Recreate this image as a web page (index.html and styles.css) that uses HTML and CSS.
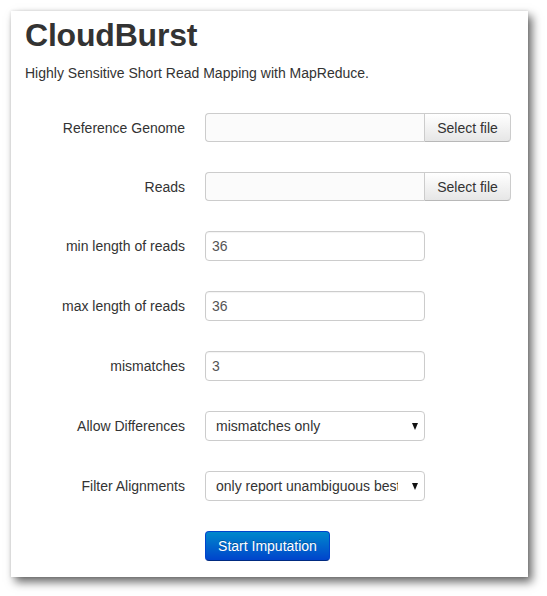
FILE: index.html
```html
<!DOCTYPE html>
<html>
<head>
<meta charset="utf-8">
<link rel="stylesheet" href="styles.css">
</head>
<body>
<div class="panel">
  <h1 class="title">CloudBurst</h1>
  <p class="lead">Highly Sensitive Short Read Mapping with MapReduce.</p>
  <form class="form">
    <div class="row file-row">
      <label class="label">Reference Genome</label>
      <div class="file">
        <span class="file-name"></span>
        <span class="file-btn">Select file</span>
      </div>
    </div>
    <div class="row file-row">
      <label class="label">Reads</label>
      <div class="file">
        <span class="file-name"></span>
        <span class="file-btn">Select file</span>
      </div>
    </div>
    <div class="row">
      <label class="label">min length of reads</label>
      <input class="input" type="text" value="36">
    </div>
    <div class="row">
      <label class="label">max length of reads</label>
      <input class="input" type="text" value="36">
    </div>
    <div class="row">
      <label class="label">mismatches</label>
      <input class="input" type="text" value="3">
    </div>
    <div class="row">
      <label class="label">Allow Differences</label>
      <span class="select-wrap">
        <select class="select"><option>mismatches only</option></select>
      </span>
    </div>
    <div class="row">
      <label class="label">Filter Alignments</label>
      <span class="select-wrap">
        <select class="select"><option>only report unambiguous best alignments</option></select>
      </span>
    </div>
    <div class="row">
      <span class="label"></span>
      <button class="btn-primary" type="button">Start Imputation</button>
    </div>
  </form>
</div>
</body>
</html>
```
FILE: styles.css
```css
html, body {
  margin: 0;
  padding: 0;
  background: #ffffff;
}
body {
  font-family: "Liberation Sans", Arial, sans-serif;
  color: #333333;
  font-size: 14px;
  line-height: 20px;
  padding: 11px 0 19px 11px;
}
.panel {
  box-sizing: border-box;
  width: 517px;
  height: 566px;
  background: #ffffff;
  padding: 6px 0 0 14px;
  box-shadow: 4px 5px 9px rgba(0, 0, 0, 0.6), 0 0 3px rgba(0, 0, 0, 0.12);
}
.title {
  margin: 0;
  font-size: 32px;
  line-height: 36px;
  font-weight: bold;
  letter-spacing: -0.2px;
  color: #333333;
}
.lead {
  margin: 10px 0 0 0;
  font-size: 14px;
  line-height: 20px;
}
.form {
  display: flex;
  flex-direction: column;
  gap: 30px;
  margin-top: 30px;
}
.row {
  display: grid;
  grid-template-columns: 160px auto;
  column-gap: 20px;
  align-items: center;
  justify-content: start;
  height: 30px;
}
.file-row {
  height: 29px;
}
.label {
  text-align: right;
  font-size: 14px;
  color: #333333;
}
.file {
  display: flex;
  width: 306px;
  height: 29px;
}
.file-name {
  box-sizing: border-box;
  flex: 1;
  border: 1px solid #cccccc;
  border-right: none;
  border-radius: 4px 0 0 4px;
  background: #fbfbfb;
}
.file-btn {
  box-sizing: border-box;
  width: 87px;
  border: 1px solid #cccccc;
  border-bottom-color: #b8b8b8;
  border-radius: 0 4px 4px 0;
  background: linear-gradient(#ffffff, #e6e6e6);
  color: #333333;
  text-align: center;
  line-height: 28px;
  font-size: 14px;
}
.input {
  box-sizing: border-box;
  width: 220px;
  height: 30px;
  margin: 0;
  padding: 4px 6px;
  border: 1px solid #cccccc;
  border-radius: 4px;
  background: #ffffff;
  font-family: "Liberation Sans", Arial, sans-serif;
  font-size: 14px;
  color: #555555;
  box-shadow: inset 0 1px 1px rgba(0, 0, 0, 0.05);
}
.select-wrap {
  position: relative;
  display: block;
  width: 220px;
  height: 30px;
}
.select-wrap::after {
  content: "";
  position: absolute;
  right: 7px;
  top: 12px;
  width: 0;
  height: 0;
  border-left: 3.5px solid transparent;
  border-right: 3.5px solid transparent;
  border-top: 7px solid #111111;
  pointer-events: none;
}
.select {
  -webkit-appearance: none;
  appearance: none;
  box-sizing: border-box;
  width: 220px;
  height: 30px;
  margin: 0;
  padding: 0 26px 0 10px;
  border: 1px solid #cccccc;
  border-radius: 4px;
  background: #ffffff;
  font-family: "Liberation Sans", Arial, sans-serif;
  font-size: 14px;
  color: #333333;
}
.btn-primary {
  box-sizing: border-box;
  width: 125px;
  height: 30px;
  margin: 0;
  padding: 0;
  border: 1px solid #0044cc;
  border-bottom-color: #002a80;
  border-radius: 4px;
  background: linear-gradient(#0088cc, #0044cc);
  color: #ffffff;
  font-family: "Liberation Sans", Arial, sans-serif;
  font-size: 14px;
  text-shadow: 0 -1px 0 rgba(0, 0, 0, 0.25);
}
```
